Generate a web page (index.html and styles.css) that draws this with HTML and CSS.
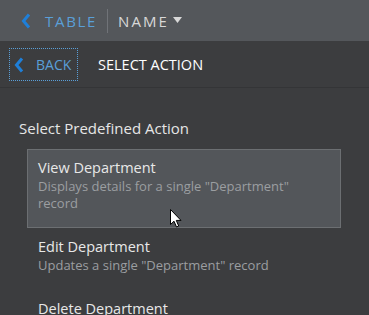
FILE: index.html
```html
<!DOCTYPE html>
<html>
<head>
<meta charset="utf-8">
<link rel="stylesheet" href="styles.css">
</head>
<body>
<div class="app">
  <header class="topbar">
    <a class="crumb">
      <svg class="chev" width="10" height="16" viewBox="0 0 10 16"><path d="M8 1.5 L2.5 8 L8 14.5" fill="none" stroke="#1f7fd8" stroke-width="3"/></svg>
      <span class="crumb-text">TABLE</span>
    </a>
    <span class="vsep"></span>
    <span class="name">NAME</span>
    <svg class="caret" width="9" height="6" viewBox="0 0 9 6"><path d="M0 0 H9 L4.5 6 Z" fill="#d8d8d8"/></svg>
  </header>
  <div class="subbar">
    <button class="back">
      <svg class="chev" width="10" height="16" viewBox="0 0 10 16"><path d="M8 1.5 L2.5 8 L8 14.5" fill="none" stroke="#1f7fd8" stroke-width="3"/></svg>
      <span>BACK</span>
    </button>
    <span class="title">SELECT ACTION</span>
  </div>
  <main class="content">
    <h2 class="section">Select Predefined Action</h2>
    <ul class="actions">
      <li class="action selected">
        <div class="a-title">View Department</div>
        <div class="a-desc">Displays details for a single "Department" record</div>
        <svg class="cursor" width="12" height="19" viewBox="0 0 12 19"><path d="M0.5 0.5 V15.5 L4 12.2 L6.5 18 L8.7 17 L6.3 11.4 L11 11.4 Z" fill="#fff" stroke="#000" stroke-width="1"/></svg>
      </li>
      <li class="action">
        <div class="a-title">Edit Department</div>
        <div class="a-desc">Updates a single "Department" record</div>
      </li>
      <li class="action">
        <div class="a-title">Delete Department</div>
        <div class="a-desc">Deletes a single "Department" record</div>
      </li>
    </ul>
  </main>
</div>
</body>
</html>
```
FILE: styles.css
```css
html, body {
  margin: 0;
  padding: 0;
  background: #3c3d3f;
  font-family: "Open Sans", "Noto Sans", sans-serif;
  overflow: hidden;
}
.app {
  width: 369px;
  height: 315px;
  overflow: hidden;
}
.topbar {
  height: 41px;
  background: #54575b;
  display: flex;
  align-items: center;
  padding-left: 21px;
  box-sizing: border-box;
}
.crumb {
  display: flex;
  align-items: center;
}
.crumb .chev {
  margin-right: 14px;
}
.crumb-text {
  color: #5a9fd8;
  font-size: 15px;
  letter-spacing: 1.7px;
}
.vsep {
  width: 1px;
  height: 24px;
  background: #707378;
  margin: 0 10px 0 10px;
}
.name {
  color: #d8d8d8;
  font-size: 15px;
  letter-spacing: 2px;
  font-weight: 400;
}
.caret {
  margin-left: 4px;
  margin-top: -2px;
}
.subbar {
  height: 47px;
  display: flex;
  align-items: center;
  border-bottom: 1px solid #343537;
  padding-left: 9px;
  box-sizing: border-box;
}
.back {
  display: flex;
  align-items: center;
  width: 69px;
  height: 33px;
  background: transparent;
  border: 1px dotted #5a9fd8;
  padding: 0 0 0 4px;
  box-sizing: border-box;
  font-family: inherit;
  color: #5a9fd8;
  font-size: 14px;
  margin-top: 1px;
}
.back .chev {
  margin-right: 12px;
}
.title {
  color: #ffffff;
  font-size: 14.5px;
  margin-left: 20px;
}
.section {
  margin: 0;
  padding: 30px 0 0 19px;
  font-size: 15px;
  font-weight: 400;
  color: #e6e6e6;
  height: 61px;
  box-sizing: border-box;
}
.actions {
  list-style: none;
  margin: 0;
  padding: 0 0 0 27px;
  width: 314px;
}
.action {
  position: relative;
  padding: 8px 10px 15px 10px;
  border: 1px solid transparent;
}
.action.selected {
  background: #53565a;
  border-color: #6c6f72;
}
.a-title {
  font-size: 14.5px;
  color: #e8e8e8;
  line-height: 20px;
}
.a-desc {
  font-size: 13px;
  color: #9b9ea1;
  line-height: 17px;
  padding-right: 30px;
}
.cursor {
  position: absolute;
  left: 142px;
  top: 59px;
}
```
